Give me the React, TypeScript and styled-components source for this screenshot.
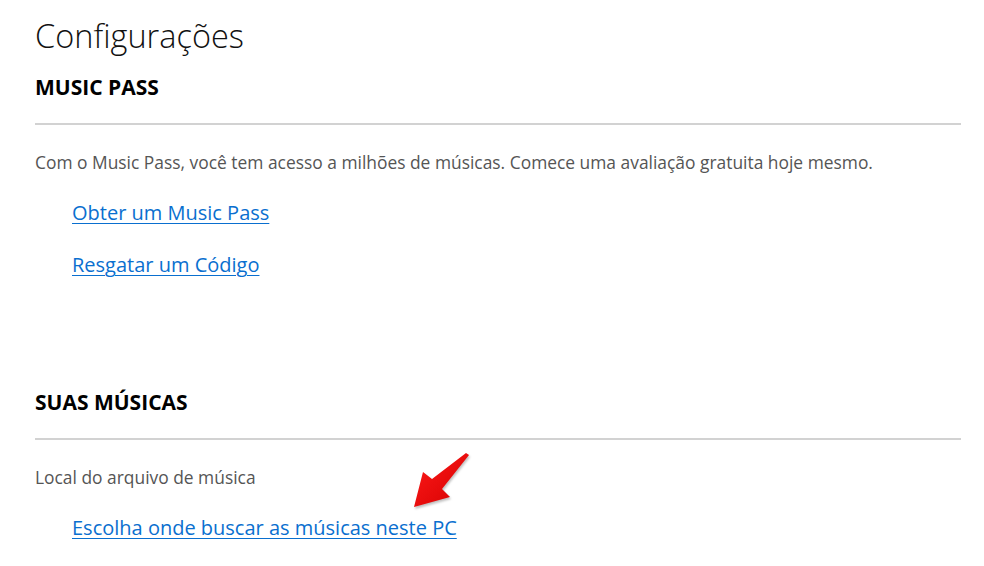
import React from 'react';
import styled, { createGlobalStyle } from 'styled-components';

const GlobalStyle = createGlobalStyle`
  html, body {
    margin: 0;
    padding: 0;
    background: #ffffff;
  }
  body {
    font-family: 'Open Sans', 'Noto Sans', sans-serif;
    color: #000;
  }
`;

const Page = styled.div`
  position: relative;
  width: 984px;
  height: 566px;
  box-sizing: border-box;
  padding: 14px 23px 0 35px;
  overflow: hidden;
`;

const Title = styled.h1`
  margin: 0;
  font-size: 32.5px;
  font-weight: 300;
  line-height: 44px;
  color: #111;
`;

const Section = styled.section<{ $top: number }>`
  margin-top: ${(p) => p.$top}px;
`;

const SectionTitle = styled.h2`
  margin: 0 0 23px;
  font-size: 21px;
  font-weight: 700;
  line-height: 26px;
  color: #000;
`;

const Divider = styled.hr`
  margin: 0;
  border: none;
  height: 2px;
  background: #d2d2d2;
`;

const Description = styled.p`
  margin: 26px 0 0;
  font-size: 17.4px;
  line-height: 22px;
  color: #555;
`;

const LinkList = styled.div`
  display: flex;
  flex-direction: column;
  gap: 24px;
  padding-left: 37px;
  margin-top: 26px;
`;

const TextLink = styled.a`
  font-size: 20px;
  line-height: 28px;
  color: #0a6fcf;
  text-decoration: underline;
  text-decoration-thickness: 1px;
  text-underline-offset: 3px;
  width: fit-content;
`;

const Arrow = styled.svg`
  position: absolute;
  left: 405px;
  top: 445px;
  filter: drop-shadow(1px 2px 1px rgba(0, 0, 0, 0.25));
`;

const App = () => {
  return (
    <Page>
      <GlobalStyle />
      <Title>Configurações</Title>

      <Section $top={16}>
        <SectionTitle>MUSIC PASS</SectionTitle>
        <Divider />
        <Description>
          Com o Music Pass, você tem acesso a milhões de músicas. Comece uma avaliação gratuita hoje mesmo.
        </Description>
        <LinkList>
          <TextLink href="#">Obter um Music Pass</TextLink>
          <TextLink href="#">Resgatar um Código</TextLink>
        </LinkList>
      </Section>

      <Section $top={110}>
        <SectionTitle>SUAS MÚSICAS</SectionTitle>
        <Divider />
        <Description>Local do arquivo de música</Description>
        <LinkList>
          <TextLink href="#">Escolha onde buscar as músicas neste PC</TextLink>
        </LinkList>
      </Section>

      <Arrow width="72" height="70" viewBox="405 445 72 70">
        <defs>
          <linearGradient id="arrowFill" x1="0" y1="0" x2="1" y2="1">
            <stop offset="0" stopColor="#ff1a1a" />
            <stop offset="1" stopColor="#d40000" />
          </linearGradient>
        </defs>
        <polygon
          points="466,453 469,455 442,489 450,497 414,507 423,472 432,479"
          fill="url(#arrowFill)"
        />
      </Arrow>
    </Page>
  );
};

export default App;
